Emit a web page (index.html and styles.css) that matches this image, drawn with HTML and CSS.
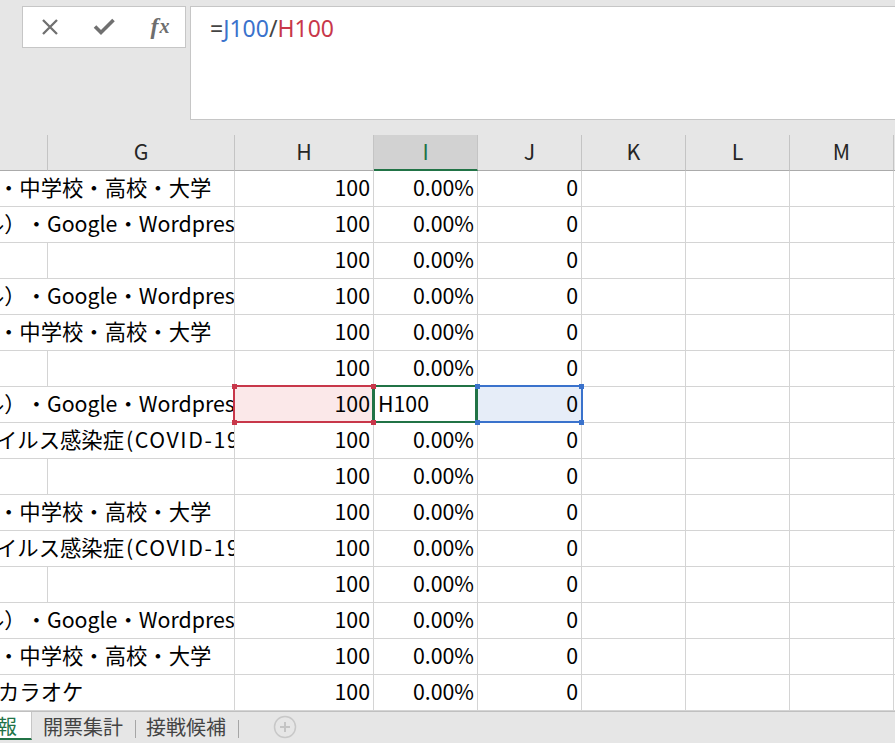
FILE: index.html
```html
<!DOCTYPE html>
<html lang="ja">
<head>
<meta charset="utf-8">
<title>Excel</title>
<link rel="stylesheet" href="styles.css">
</head>
<body>
<div class="topbar">
  <div class="fx-box">
    <div class="fx-slot">
      <svg width="20" height="20" viewBox="0 0 20 20"><path d="M3 3 L17 17 M17 3 L3 17" stroke="#707070" stroke-width="2.3" fill="none"/></svg>
    </div>
    <div class="fx-slot">
      <svg width="22" height="20" viewBox="0 0 22 20"><path d="M2 9.5 L8 15.5 L20.5 3" stroke="#707070" stroke-width="3.6" fill="none" stroke-linejoin="miter"/></svg>
    </div>
    <div class="fx-slot fx-text"><span class="fx-f">f</span><span class="fx-x">x</span></div>
  </div>
  <div class="formula"><span class="f-eq">=</span><span class="f-blue">J100</span><span class="f-eq">/</span><span class="f-red">H100</span></div>
</div>

<div class="sheet">
  <div class="hd"></div>
  <div class="hd">G</div>
  <div class="hd">H</div>
  <div class="hd hd-sel">I</div>
  <div class="hd">J</div>
  <div class="hd">K</div>
  <div class="hd">L</div>
  <div class="hd">M</div>
  <div class="hd"></div>

  <!-- row 1 -->
  <div class="c txt"><span class="t1">・中学校・高校・大学</span></div>
  <div class="c num">100</div><div class="c num">0.00%</div><div class="c num">0</div>
  <div class="c"></div><div class="c"></div><div class="c"></div><div class="c"></div>
  <!-- row 2 -->
  <div class="c txt"><span class="t2">ル）・Google・Wordpress</span></div>
  <div class="c num">100</div><div class="c num">0.00%</div><div class="c num">0</div>
  <div class="c"></div><div class="c"></div><div class="c"></div><div class="c"></div>
  <!-- row 3 -->
  <div class="c"></div><div class="c"></div>
  <div class="c num">100</div><div class="c num">0.00%</div><div class="c num">0</div>
  <div class="c"></div><div class="c"></div><div class="c"></div><div class="c"></div>
  <!-- row 4 -->
  <div class="c txt"><span class="t2">ル）・Google・Wordpress</span></div>
  <div class="c num">100</div><div class="c num">0.00%</div><div class="c num">0</div>
  <div class="c"></div><div class="c"></div><div class="c"></div><div class="c"></div>
  <!-- row 5 -->
  <div class="c txt"><span class="t1">・中学校・高校・大学</span></div>
  <div class="c num">100</div><div class="c num">0.00%</div><div class="c num">0</div>
  <div class="c"></div><div class="c"></div><div class="c"></div><div class="c"></div>
  <!-- row 6 -->
  <div class="c"></div><div class="c"></div>
  <div class="c num">100</div><div class="c num">0.00%</div><div class="c num">0</div>
  <div class="c"></div><div class="c"></div><div class="c"></div><div class="c"></div>
  <!-- row 7 (editing) -->
  <div class="c txt"><span class="t2">ル）・Google・Wordpress</span></div>
  <div class="c num ref-red">100</div><div class="c edit">H100</div><div class="c num ref-blue">0</div>
  <div class="c"></div><div class="c"></div><div class="c"></div><div class="c"></div>
  <!-- row 8 -->
  <div class="c txt"><span class="t3">イルス感染症<span class="lat">(COVID-19)</span></span></div>
  <div class="c num">100</div><div class="c num">0.00%</div><div class="c num">0</div>
  <div class="c"></div><div class="c"></div><div class="c"></div><div class="c"></div>
  <!-- row 9 -->
  <div class="c"></div><div class="c"></div>
  <div class="c num">100</div><div class="c num">0.00%</div><div class="c num">0</div>
  <div class="c"></div><div class="c"></div><div class="c"></div><div class="c"></div>
  <!-- row 10 -->
  <div class="c txt"><span class="t1">・中学校・高校・大学</span></div>
  <div class="c num">100</div><div class="c num">0.00%</div><div class="c num">0</div>
  <div class="c"></div><div class="c"></div><div class="c"></div><div class="c"></div>
  <!-- row 11 -->
  <div class="c txt"><span class="t3">イルス感染症<span class="lat">(COVID-19)</span></span></div>
  <div class="c num">100</div><div class="c num">0.00%</div><div class="c num">0</div>
  <div class="c"></div><div class="c"></div><div class="c"></div><div class="c"></div>
  <!-- row 12 -->
  <div class="c"></div><div class="c"></div>
  <div class="c num">100</div><div class="c num">0.00%</div><div class="c num">0</div>
  <div class="c"></div><div class="c"></div><div class="c"></div><div class="c"></div>
  <!-- row 13 -->
  <div class="c txt"><span class="t2">ル）・Google・Wordpress</span></div>
  <div class="c num">100</div><div class="c num">0.00%</div><div class="c num">0</div>
  <div class="c"></div><div class="c"></div><div class="c"></div><div class="c"></div>
  <!-- row 14 -->
  <div class="c txt"><span class="t1">・中学校・高校・大学</span></div>
  <div class="c num">100</div><div class="c num">0.00%</div><div class="c num">0</div>
  <div class="c"></div><div class="c"></div><div class="c"></div><div class="c"></div>
  <!-- row 15 -->
  <div class="c txt"><span class="t4">カラオケ</span></div>
  <div class="c num">100</div><div class="c num">0.00%</div><div class="c num">0</div>
  <div class="c"></div><div class="c"></div><div class="c"></div><div class="c"></div>

  <div class="sel sel-red"></div>
  <div class="sel sel-blue"></div>
  <div class="sel sel-green"></div>
  <div class="hdl red" style="left:232px;top:249px"></div>
  <div class="hdl red" style="left:371px;top:249px"></div>
  <div class="hdl red" style="left:232px;top:285px"></div>
  <div class="hdl red" style="left:371px;top:285px"></div>
  <div class="hdl blue" style="left:475px;top:249px"></div>
  <div class="hdl blue" style="left:579px;top:249px"></div>
  <div class="hdl blue" style="left:475px;top:285px"></div>
  <div class="hdl blue" style="left:579px;top:285px"></div>
</div>

<div class="tabs">
  <div class="tab active"><span class="tab-clip">報</span></div>
  <div class="tab">開票集計</div>
  <div class="tab">接戦候補</div>
  <div class="tab-add">
    <svg width="24" height="24" viewBox="0 0 24 24"><circle cx="12" cy="12" r="10.5" stroke="#c8c8c8" stroke-width="1.5" fill="none"/><path d="M12 7 V17 M7 12 H17" stroke="#c4c4c4" stroke-width="2"/></svg>
  </div>
</div>
</body>
</html>
```
FILE: styles.css
```css
* { box-sizing: border-box; }
html, body { margin: 0; padding: 0; }
body {
  width: 895px;
  height: 743px;
  overflow: hidden;
  background: #e6e6e6;
  font-family: "Noto Sans CJK JP", "Noto Sans", sans-serif;
  color: #000;
  text-spacing-trim: space-all;
}

/* formula bar */
.topbar {
  height: 135px;
  padding-top: 6px;
  display: flex;
  align-items: flex-start;
}
.fx-box {
  margin-left: 22px;
  width: 164px;
  height: 42px;
  background: #fff;
  border: 1px solid #c6c6c6;
  display: flex;
}
.fx-slot {
  width: 54px;
  display: flex;
  align-items: center;
  justify-content: center;
}
.fx-text {
  font-family: "Liberation Serif", "DejaVu Serif", serif;
  font-style: italic;
  font-weight: bold;
  color: #6e6e6e;
  padding-bottom: 2px;
  padding-left: 4px;
}
.fx-f { font-size: 24px; }
.fx-x { font-size: 20px; margin-left: 1px; }
.formula {
  flex: 1;
  margin-left: 4px;
  margin-right: -12px;
  height: 114px;
  background: #fff;
  border: 1px solid #c6c6c6;
  padding: 6px 0 0 19px;
  font-family: "Noto Sans", sans-serif;
  font-size: 23px;
  line-height: 30px;
  white-space: nowrap;
}
.f-eq { color: #444; }
.f-blue { color: #3a72cc; }
.f-red { color: #c8374a; }

/* sheet grid */
.sheet {
  position: relative;
  display: grid;
  grid-template-columns: 48px 187px 139px 104px 104px 104px 104px 104px 1fr;
  grid-auto-rows: 36px;
  background: #fff;
}
.hd {
  background: #e6e6e6;
  border-right: 1px solid #c4c4c4;
  border-bottom: 1px solid #ababab;
  display: flex;
  align-items: center;
  justify-content: center;
  font-size: 21.33px;
  color: #262626;
  padding-bottom: 4px;
}
.hd-sel {
  background: #d2d2d2;
  color: #217346;
  border-bottom: 2px solid #217346;
  padding-bottom: 3px;
}
.c {
  border-right: 1px solid #d4d4d4;
  border-bottom: 1px solid #d4d4d4;
  font-size: 21.33px;
  display: flex;
  align-items: center;
  padding: 0 3px 4px;
  white-space: nowrap;
  overflow: hidden;
}
.num { justify-content: flex-end; }
.txt {
  grid-column: span 2;
  padding-left: 0;
  padding-right: 0;
}
.txt > span { flex: none; }
.t1 { margin-left: -2px; }
.t2 { margin-left: -17px; }
.t3 { margin-left: -4px; }
.t4 { margin-left: -2px; }
.lat { letter-spacing: 1.6px; margin-left: 2px; }
.edit { padding-left: 4px; }
.ref-red { background: #fbe8e9; }
.ref-blue { background: #e6edf8; }

/* selection overlays */
.sel {
  position: absolute;
  top: 250px;
  height: 38px;
  border: 2px solid;
}
.sel-red { left: 233px; width: 141px; border-color: #c8374a; }
.sel-blue { left: 476px; width: 107px; border-color: #3a72cc; }
.sel-green { left: 372px; width: 106px; border-color: #217346; border-left-width: 3px; border-right-width: 3px; }
.hdl {
  position: absolute;
  width: 5px;
  height: 5px;
}
.hdl.red { background: #c8374a; }
.hdl.blue { background: #3a72cc; }

/* sheet tabs */
.tabs {
  height: 32px;
  border-top: 1px solid #c0c0c0;
  display: flex;
  align-items: flex-start;
  font-size: 20px;
  color: #444;
}
.tab {
  height: 28px;
  display: flex;
  align-items: center;
  padding: 0 12px 0 11px;
  position: relative;
  white-space: nowrap;
}
.tab::after {
  content: "";
  position: absolute;
  right: -1px;
  top: 8px;
  width: 1px;
  height: 18px;
  background: #a6a6a6;
}
.tab.active {
  width: 32px;
  padding: 0;
  background: #fff;
  color: #217346;
  border-right: 1px solid #c6c6c6;
  border-bottom: 2px solid #217346;
  overflow: hidden;
}
.tab.active::after { display: none; }
.tab-clip { margin-left: -3px; }
.tab-add {
  margin-left: 35px;
  height: 32px;
  display: flex;
  align-items: center;
  padding-bottom: 2px;
}
```
